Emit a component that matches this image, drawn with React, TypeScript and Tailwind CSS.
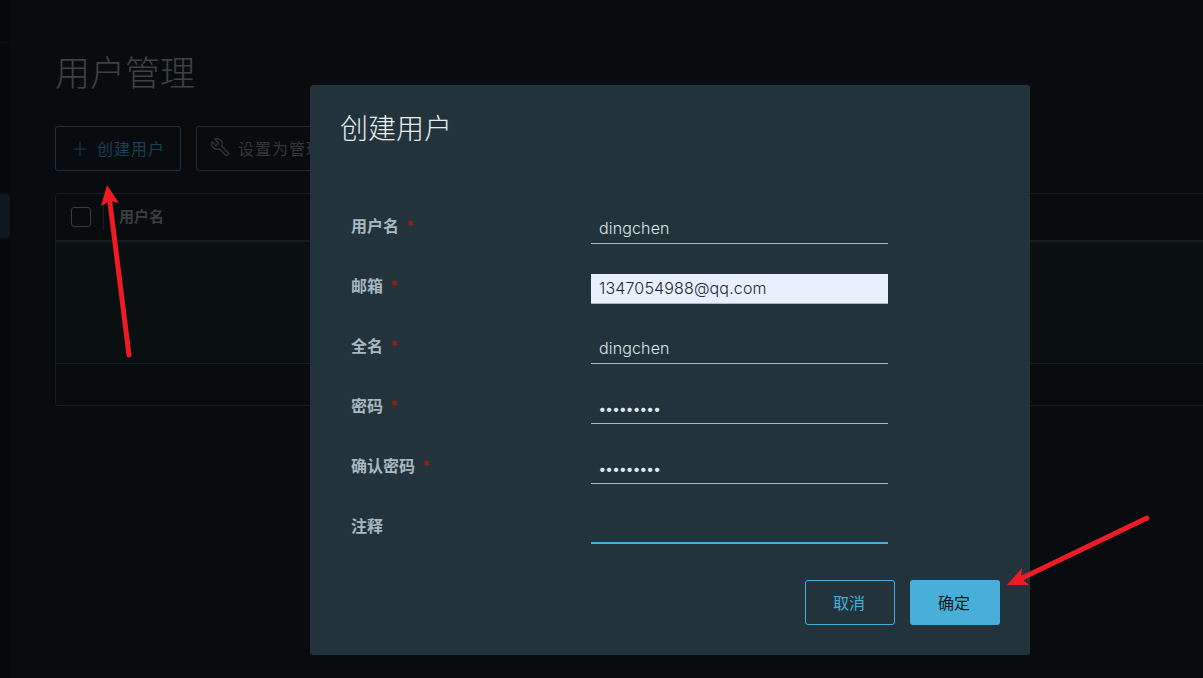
const cjk = "font-['Inter','Noto_Sans_CJK_SC',sans-serif]";

const fields = [
  { label: "用户名", value: "dingchen", required: true },
  { label: "邮箱", value: "1347054988@qq.com", required: true, autofill: true },
  { label: "全名", value: "dingchen", required: true },
  { label: "密码", value: "•••••••••", required: true, secret: true },
  { label: "确认密码", value: "•••••••••", required: true, secret: true },
  { label: "注释", value: "", focus: true },
];

function FormRow({ field }: { field: (typeof fields)[number] }) {
  return (
    <div className="flex h-[60px] items-start">
      <div className="flex w-[240px] pt-[1px] text-[16px] leading-[22px] font-bold text-[#a9b8be]">
        {field.label}
        {field.required && <span className="ml-[7px] text-[15px] font-bold text-[#8f2413]">*</span>}
      </div>
      <div
        className={
          "h-[30px] w-[297px] truncate border-b pl-2 leading-[29px] " +
          (field.autofill
            ? "bg-[#e8f0fe] border-[#a9b8be] text-[#1b2a31] "
            : field.focus
              ? "border-b-2 border-[#49afd9] text-[#e3eaed] "
              : "border-[#a9b8be] text-[#dfe6e9] ") +
          (field.secret ? "text-[14px] font-bold tracking-[0.2px]" : "text-[16px] font-light tracking-[0.15px]")
        }
      >
        {field.value}
      </div>
    </div>
  );
}

export default function App() {
  return (
    <div className={"relative flex h-[678px] overflow-hidden bg-[#080c0f] " + cjk}>
      {/* sidebar */}
      <div className="w-[10px] shrink-0 bg-[#05090b]">
        <div className="h-[43px] border-b border-[#0b1013]" />
        <div className="mt-[151px] h-[44px] rounded-r-[4px] bg-[#10181d]" />
      </div>

      {/* page behind the overlay */}
      <div className="min-w-0 flex-1 pl-[45px]">
        <h1 className="pt-[48px] text-[35px] leading-[50px] font-light text-[#3f4243]">用户管理</h1>
        <div className="mt-[28px] flex gap-[15px]">
          <button className="flex h-[45px] w-[126px] items-center rounded-[3px] border border-[#173447] pl-[16px] text-[16px] tracking-[1px] text-[#173f57]">
            <svg width="16" height="16" viewBox="0 0 16 16" className="mr-[9px] shrink-0" fill="none" stroke="#173f57" strokeWidth="1">
              <path d="M8 1v14M1 8h14" />
            </svg>
            创建用户
          </button>
          <button className="flex h-[45px] w-[200px] items-center rounded-[3px] border border-[#26292b] pl-[13px] text-[16px] tracking-[1px] text-[#323638]">
            <svg width="21" height="21" viewBox="0 0 24 24" className="mr-[7px] mb-[2px] shrink-0 -scale-x-100" fill="none" stroke="#323638" strokeWidth="1.5" strokeLinecap="round" strokeLinejoin="round">
              <path d="M14.7 6.3a1 1 0 0 0 0 1.4l1.6 1.6a1 1 0 0 0 1.4 0l3.77-3.77a6 6 0 0 1-7.94 7.94l-6.91 6.91a2.12 2.12 0 0 1-3-3l6.91-6.91a6 6 0 0 1 7.94-7.94l-3.76 3.76z" />
            </svg>
            设置为管理员
          </button>
        </div>

        {/* table */}
        <div className="mt-[22px] mr-[-8px] rounded-[3px] border border-[#171c1f]">
          <div className="flex h-[48px] items-center border-b-2 border-[#171c1f] pl-[15px]">
            <span className="h-[20px] w-[20px] rounded-[3px] border border-[#3a3d3e]" />
            <span className="ml-[12px] h-[25px] w-px bg-[#1a1e20]" />
            <span className="ml-[15px] text-[15px] font-bold text-[#3a3d3f]">用户名</span>
          </div>
          <div className="h-[122px] border-b border-[#171c1f] bg-[#0a0f12]" />
          <div className="h-[41px]" />
        </div>
      </div>

      {/* dialog */}
      <div className="absolute top-[85px] left-[310px] h-[570px] w-[720px] rounded-[3px] bg-[#22333b] px-[30px] pt-[25px]">
        <h2 className="text-[28px] leading-[38px] font-light text-[#e9eef0]">创建用户</h2>
        <div className="mt-[66px] pl-[11px]">
          {fields.map((field) => (
            <FormRow key={field.label} field={field} />
          ))}
        </div>
        <div className="mt-[6px] flex justify-end gap-[15px]">
          <button className="h-[45px] w-[90px] rounded-[3px] border border-[#49afd9] pr-[2px] text-[16px] text-[#49afd9]">取消</button>
          <button className="h-[45px] w-[90px] rounded-[3px] bg-[#49afd9] pr-[2px] text-[16px] text-[#0b1a20]">确定</button>
        </div>
      </div>

      {/* annotation arrows */}
      <svg className="pointer-events-none absolute top-0 left-0" width="1203" height="678" viewBox="0 0 1203 678">
        <path d="M109 195 129 355" stroke="#ed1c24" strokeWidth="5" strokeLinecap="round" fill="none" />
        <path d="M107 185 101 206 110 201 119 203z" fill="#ed1c24" />
        <path d="M1147 518 1018 580" stroke="#ed1c24" strokeWidth="5" strokeLinecap="round" fill="none" />
        <path d="M1007 585 1022 568 1021 578 1029 585z" fill="#ed1c24" />
      </svg>
    </div>
  );
}
